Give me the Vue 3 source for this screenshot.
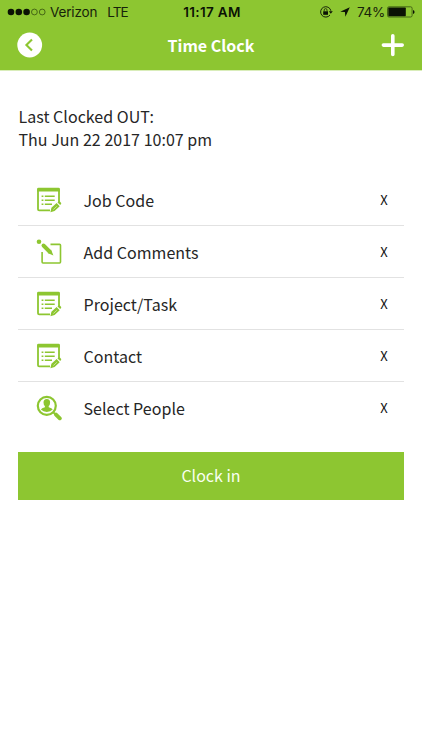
<script setup>
const rows = [
  { label: 'Job Code', icon: 'form' },
  { label: 'Add Comments', icon: 'comment' },
  { label: 'Project/Task', icon: 'form' },
  { label: 'Contact', icon: 'form' },
  { label: 'Select People', icon: 'people' },
]
</script>

<template>
  <div class="screen">
    <header class="top">
      <div class="status">
        <div class="carrier">
          <svg class="signal" width="40" height="10" viewBox="0 0 40 10">
            <circle cx="4" cy="5" r="3.3" />
            <circle cx="11.8" cy="5" r="3.3" />
            <circle cx="19.6" cy="5" r="3.3" />
            <circle class="empty" cx="27.4" cy="5" r="2.9" />
            <circle class="empty" cx="35.2" cy="5" r="2.9" />
          </svg>
          <span class="name">Verizon</span>
          <span class="network">LTE</span>
        </div>
        <span class="time">11:17 AM</span>
        <div class="indicators">
          <svg width="14" height="14" viewBox="0 0 14 14">
            <path d="M11 10A5.2 5.2 0 1 1 11.9 5.8" fill="none" stroke="#17230a" />
            <path d="M9.9 6.3h3.9l-2 2.5z" />
            <path d="M4.2 6.3h4.8v3.5H4.2z" />
            <path d="M5.2 6.5V5a1.4 1.4 0 0 1 2.8 0v1.5" fill="none" stroke="#17230a" stroke-width=".8" />
          </svg>
          <svg class="arrow" width="10" height="10" viewBox="0 0 10 10"><path d="M9.8.2 5.4 9.7 4.9 5.1.2 4.8z" /></svg>
          <span class="percent">74%</span>
          <svg class="battery" width="28" height="12" viewBox="0 0 28 12">
            <rect x=".5" y=".8" width="24.6" height="10.2" rx="1.5" fill="none" stroke="#35500f" stroke-width=".8" />
            <rect x="1.3" y="1.6" width="17.5" height="8.6" rx=".6" />
            <path d="M26 4q1.6.4 1.6 2T26 8z" />
          </svg>
        </div>
      </div>
      <nav class="nav">
        <svg width="26" height="26" viewBox="0 0 26 26">
          <circle cx="12.7" cy="13" r="12.4" fill="#fff" />
          <path d="M15 7.4 9.4 13l5.6 5.6" fill="none" stroke="#8dc631" stroke-width="2.1" />
        </svg>
        <h1>Time Clock</h1>
        <svg width="24" height="24" viewBox="0 0 24 24">
          <path d="M11.8 2.7v18.8M2.4 12.1h18.8" stroke="#fff" stroke-width="3.6" stroke-linecap="round" />
        </svg>
      </nav>
    </header>

    <main>
      <p class="last"><span>Last Clocked OUT:</span><br><span class="date">Thu Jun 22 2017 10:07 pm</span></p>
      <ul>
        <li v-for="row in rows" :key="row.label">
          <svg v-if="row.icon === 'form'" class="icon" width="26" height="26" viewBox="0 0 26 26">
            <path d="M23 15V3.2Q23 2 21.8 2H3.2Q2 2 2 3.2v19Q2 23.4 3.2 23.4H14" fill="none" stroke="#8dc631" stroke-width="1.8" />
            <path d="M1.1 4.6V2.2Q1.1.8 2.5.8h20Q23.9.8 23.9 2.2v2.4z" />
            <path d="M5.6 8.6h1.8v1.5H5.6zM8.8 8.6h9.9v1.5H8.8zM5.6 12.6h1.8v1.5H5.6zM8.8 12.6h9.9v1.5H8.8zM5.6 16.6h1.8v1.5H5.6zM8.8 16.6h7.2v1.5H8.8z" />
            <path d="m14.4 25.3 1-4.5 5.2-4.8 3.1 3.2-5.1 4.9zM21.5 15.4l1-.9q.7-.5 1.4.1l1.1 1.1q.6.7 0 1.4l-.8.9z" />
            <path d="m17.4 22.5 3.4-3.2" stroke="#fff" stroke-width=".5" />
          </svg>
          <svg v-else-if="row.icon === 'comment'" class="icon" width="26" height="26" viewBox="0 0 26 26">
            <path d="M14.5 5.4h9.1q.9 0 .9.9v16.8q0 .9-.9.9H7q-.9 0-.9-.9V13" fill="none" stroke="#8dc631" stroke-width="1.6" />
            <path d="m7.5 6.5 6 6" stroke="#8dc631" stroke-width="3.9" stroke-linecap="round" />
            <path d="m11.6 14 3.4-3.4 2.4 5.8z" />
            <circle cx="3" cy="2.7" r="2.3" />
          </svg>
          <svg v-else class="icon" width="26" height="26" viewBox="0 0 26 26">
            <circle cx="10.8" cy="10.8" r="9" fill="none" stroke="#8dc631" stroke-width="2.2" />
            <path d="M7.5 7.5Q7.5 3.9 10.8 3.9t3.3 3.6q0 2.3-1.4 3.6v1.1q3.3.7 4 2.4-2.3 2.4-5.9 2.4t-5.9-2.4q.7-1.7 4-2.4v-1.1Q7.5 9.8 7.5 7.5z" />
            <path d="m17 17 2 2" stroke="#8dc631" stroke-width="1.8" />
            <path d="m20 19.6 3.8 3.7" stroke="#8dc631" stroke-width="3.9" stroke-linecap="round" />
          </svg>
          <span class="label">{{ row.label }}</span>
          <button class="clear">X</button>
        </li>
      </ul>
      <button class="clock">Clock in</button>
    </main>
  </div>
</template>

<style>
body { margin: 0; background: #fff; }
</style>

<style scoped>
.screen {
  width: 422px;
  height: 750px;
  overflow: hidden;
  background: #fff;
  color: #262626;
  font: 16px/23px "Noto Sans CJK SC", sans-serif;
}
.top { height: 71px; background: #8dc631; border-bottom: 1px solid #d9edba; box-sizing: border-box; }
.status {
  display: grid;
  grid-template-columns: 1fr auto 1fr;
  align-items: center;
  height: 24px;
  padding: 0 7px;
  color: #17230a;
  font: 13.5px/24px Inter, sans-serif;
}
.status svg { fill: #0b1204; flex: none; }
.carrier, .indicators { display: flex; align-items: center; }
.signal .empty { fill: none; stroke: #35500f; stroke-width: .8; }
.name { margin-left: 3px; letter-spacing: -.15px; }
.network { margin-left: 10px; letter-spacing: -.9px; }
.time { font-weight: 600; color: #0b1204; padding-left: 2px; letter-spacing: .3px; }
.indicators { justify-content: flex-end; }
.indicators > svg:first-child { margin-right: 1px; }
.arrow { margin-left: 6px; }
.percent { margin: 0 2px 0 7px; letter-spacing: -.3px; }
.nav {
  display: flex;
  align-items: center;
  justify-content: space-between;
  height: 42px;
  padding: 0 17px 0 17px;
}
h1 { margin: 0 2px 0 0; color: #fff; font-size: 16px; line-height: 24px; font-weight: 700; }
main { padding: 34px 18px 0; }
.last { margin: 0; padding-left: .5px; letter-spacing: .03px; }
ul { list-style: none; margin: 23px 0 0; padding: 0; }
li {
  display: flex;
  align-items: center;
  box-sizing: border-box;
  height: 52px;
  padding: 0 15px 0 18px;
  border-bottom: 1px solid #e2e2e2;
}
li:last-child { border-bottom-color: transparent; }
.icon { fill: #8dc631; flex: none; }
.label { flex: 1; margin-left: 21.5px; padding-top: 1px; letter-spacing: .03px; }
button { border: 0; padding: 0; font: inherit; color: inherit; }
.clear { width: 10px; background: none; color: #111; font-size: 13px; }
.clock { display: block; width: 386px; height: 48px; margin-top: 18px; padding-bottom: 2px; background: #8dc631; color: #f8fff0; }
</style>
